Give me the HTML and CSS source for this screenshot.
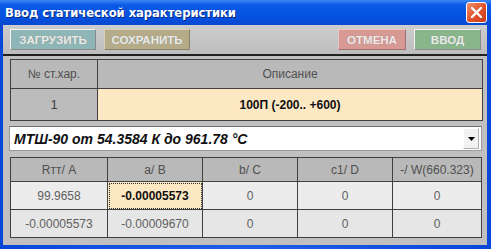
FILE: index.html
```html
<!DOCTYPE html>
<html lang="ru">
<head>
    <meta charset="UTF-8">
    <title>Ввод статической характеристики</title>
    <link rel="stylesheet" href="styles.css">
</head>
<body>
    <div class="window">
        <!-- заголовок окна -->
        <div class="titlebar">
            <span class="title">Ввод статической характеристики</span>
            <span class="close">
                <svg width="13" height="13" viewBox="0 0 13 13">
                    <path d="M2 2 L11 11 M11 2 L2 11" stroke="#fff" stroke-width="2.4" stroke-linecap="round"/>
                </svg>
            </span>
        </div>

        <div class="body">
            <!-- панель кнопок -->
            <div class="toolbar">
                <button class="btn load">ЗАГРУЗИТЬ</button>
                <button class="btn save">СОХРАНИТЬ</button>
                <span class="spacer"></span>
                <button class="btn cancel">ОТМЕНА</button>
                <button class="btn ok">ВВОД</button>
            </div>

            <table class="grid head-grid">
                <tr class="hdr">
                    <td class="c-num">№ ст.хар.</td>
                    <td>Описание</td>
                </tr>
                <tr class="main-row">
                    <td class="num">1</td>
                    <td class="desc">100П (-200.. +600)</td>
                </tr>
            </table>

            <div class="combo">
                <span class="combo-text">МТШ-90 от 54.3584 К до 961.78 °С</span>
                <span class="combo-btn">
                    <svg width="7" height="4" viewBox="0 0 7 4"><path d="M0 0 H7 L3.5 4 Z" fill="#000"/></svg>
                </span>
            </div>

            <table class="grid coef-grid">
                <tr class="hdr">
                    <td>Rтт/ A</td>
                    <td>a/ B</td>
                    <td>b/ C</td>
                    <td>c1/ D</td>
                    <td>-/ W(660.323)</td>
                </tr>
                <tr class="row1">
                    <td>99.9658</td>
                    <td class="focus">-0.00005573</td>
                    <td>0</td>
                    <td>0</td>
                    <td>0</td>
                </tr>
                <tr class="row2">
                    <td>-0.00005573</td>
                    <td>-0.00009670</td>
                    <td>0</td>
                    <td>0</td>
                    <td>0</td>
                </tr>
            </table>
        </div>
    </div>
</body>
</html>
```

FILE: styles.css
```css
html, body {
    margin: 0;
    padding: 0;
    background: #0a3fc8;
}

.window {
    width: 491px;
    height: 249px;
    box-sizing: border-box;
    display: flex;
    flex-direction: column;
    background: linear-gradient(90deg, #0848d8, #1f5ee8 50%, #0848d8);
    font-family: "Liberation Sans", Arial, sans-serif;
}

/* заголовок */
.titlebar {
    height: 25px;
    display: flex;
    align-items: center;
    padding: 0 4px 0 5px;
    background: linear-gradient(180deg, #3c86f4 0%, #0a5ae6 20%, #0450e0 70%, #0a48d0 100%);
}

.title {
    flex: 1;
    color: #fff;
    font-family: "DejaVu Sans", Tahoma, sans-serif;
    font-weight: bold;
    font-size: 11.6px;
    letter-spacing: -0.05px;
    text-shadow: 1px 1px 0 #0a2a80;
}

.close {
    width: 21px;
    height: 21px;
    box-sizing: border-box;
    display: flex;
    align-items: center;
    justify-content: center;
    border: 1px solid #fff;
    border-radius: 3px;
    background: linear-gradient(135deg, #f0906a, #e0502a 55%, #c83a18);
}

.body {
    flex: 1;
    margin: 0 4px 4px 3px;
    background: #c0c0c0;
    display: flex;
    flex-direction: column;
}

/* панель кнопок */
.toolbar {
    display: flex;
    align-items: center;
    gap: 8px;
    height: 29px;
    padding: 0 6px 0 7px;
    border-bottom: 2px solid #202020;
    background: linear-gradient(180deg, #cdcdcd, #bdbdbd);
}

.spacer {
    flex: 1;
}

.btn {
    height: 21px;
    box-sizing: border-box;
    padding: 0;
    border: 1px solid;
    border-color: #f4f4f4 #8a8a8a #8a8a8a #f4f4f4;
    font-family: "Liberation Sans", Arial, sans-serif;
    font-weight: bold;
    font-size: 11.5px;
    color: #e8ece8;
    text-shadow: 0 0 1px #909090;
}

.load {
    width: 86px;
    background: #8fb6b6;
}

.save {
    width: 86px;
    background: #b6ab88;
    border-color: #d8d0b8 #8a8068 #8a8068 #d8d0b8;
}

.cancel {
    width: 68px;
    background: #d69994;
    border-color: #e8c8c4 #a07070 #a07070 #e8c8c4;
    color: #f4e8e8;
}

.ok {
    width: 67px;
    background: #88b68a;
}

/* таблицы */
.grid {
    border-collapse: collapse;
    margin-left: 7px;
    font-size: 12px;
    text-align: center;
}

.grid td {
    border: 1px solid #404040;
    padding: 0;
}

.head-grid {
    width: 473px;
    margin-top: 3px;
}

.head-grid .hdr td {
    height: 28px;
    background: #b9b9b9;
    color: #505050;
}

.head-grid .c-num {
    width: 86px;
}

.main-row td {
    height: 31px;
}

.main-row .num {
    background: #bcbcbc;
    color: #404040;
    font-size: 13px;
}

.main-row .desc {
    background: #fde8c4;
    color: #101010;
    font-weight: bold;
    font-size: 12px;
}

/* выпадающий список */
.combo {
    display: flex;
    align-items: center;
    height: 23px;
    margin: 5px 5px 0 6px;
    padding-left: 4px;
    background: #fff;
    border: 1px solid #9a9a9a;
    border-top-color: #707070;
}

.combo-text {
    flex: 1;
    font-weight: bold;
    font-style: italic;
    font-size: 14px;
    color: #101010;
}

.combo-btn {
    width: 14px;
    height: 19px;
    margin-right: 2px;
    display: flex;
    align-items: center;
    justify-content: center;
    background: #f2f2f2;
    border: 1px solid;
    border-color: #fff #b0b0b0 #b0b0b0 #fff;
}

.coef-grid {
    width: 472px;
    margin-top: 6px;
    table-layout: fixed;
    color: #606060;
}

.coef-grid .hdr td {
    height: 23px;
    background: #b9b9b9;
    color: #505050;
}

.coef-grid td:nth-child(1) { width: 96px; }
.coef-grid td:nth-child(2) { width: 94px; }
.coef-grid td:nth-child(3) { width: 94px; }
.coef-grid td:nth-child(4) { width: 94px; }

.coef-grid .row1 td {
    height: 27px;
    background: #ececec;
}

.coef-grid .row2 td {
    height: 27px;
    background: #e6e6e6;
}

.coef-grid td.focus {
    background: #fde8c4;
    color: #101010;
    font-weight: bold;
    outline: 1px dotted #303030;
    outline-offset: -2px;
}
```
